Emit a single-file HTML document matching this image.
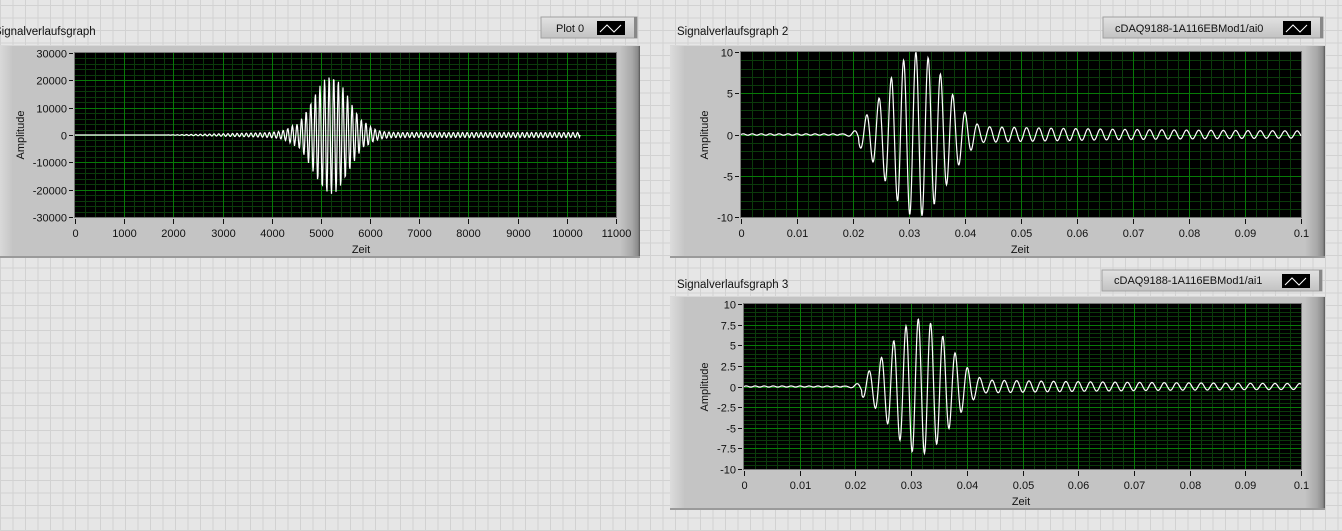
<!DOCTYPE html>
<html><head><meta charset="utf-8"><style>
html,body{margin:0;padding:0;}
body{width:1342px;height:531px;overflow:hidden;background-color:#e6e6e6;
background-image:repeating-linear-gradient(90deg,#d2d2d2 0 1px,transparent 1px 12.5px),repeating-linear-gradient(0deg,#d2d2d2 0 1px,transparent 1px 12.5px);
font-family:"Liberation Sans",sans-serif;}
svg{position:absolute;left:0;top:0;}
text{font-family:"Liberation Sans",sans-serif;font-size:11px;fill:#111;}
</style></head><body>
<svg id="s" width="1342" height="531" xmlns="http://www.w3.org/2000/svg">
<defs>
<linearGradient id="pr" x1="0" x2="1"><stop offset="0" stop-color="#c4c4c4"/><stop offset="0.6" stop-color="#a8a8a8"/><stop offset="0.9" stop-color="#8a8a8a"/><stop offset="1" stop-color="#555"/></linearGradient>
<linearGradient id="pl" x1="0" x2="1"><stop offset="0" stop-color="#dcdcdc"/><stop offset="1" stop-color="#c6c6c6"/></linearGradient>
<linearGradient id="lg" x1="0" y1="0" x2="0" y2="1"><stop offset="0" stop-color="#e2e2e2"/><stop offset="1" stop-color="#c2c2c2"/></linearGradient>
</defs>
<g id="g"></g>
<text x="-6" y="35" style="font-size:11.5px">Signalverlaufsgraph</text>
<text x="677" y="35" style="font-size:11.5px">Signalverlaufsgraph 2</text>
<text x="677" y="288" style="font-size:11.5px">Signalverlaufsgraph 3</text>
<text x="556" y="32">Plot 0</text>
<text x="1115" y="32">cDAQ9188-1A116EBMod1/ai0</text>
<text x="1114" y="284">cDAQ9188-1A116EBMod1/ai1</text>
<text transform="translate(24,135) rotate(-90)" text-anchor="middle">Amplitude</text>
<text transform="translate(708,135) rotate(-90)" text-anchor="middle">Amplitude</text>
<text transform="translate(708,387) rotate(-90)" text-anchor="middle">Amplitude</text>
<text x="361" y="253" text-anchor="middle">Zeit</text>
<text x="1020" y="253" text-anchor="middle">Zeit</text>
<text x="1021" y="505" text-anchor="middle">Zeit</text>
<g id="lbl"></g>
</svg>
<script>
var g=document.getElementById('g'),L=document.getElementById('lbl'),NS='http://www.w3.org/2000/svg';
function el(t,a,p){var e=document.createElementNS(NS,t);for(var k in a)e.setAttribute(k,a[k]);(p||g).appendChild(e);return e;}
function panel(x,y,w,h){el('rect',{x:x,y:y,width:w,height:h,fill:'#c4c4c4'});el('rect',{x:x,y:y,width:14,height:h,fill:'url(#pl)'});el('rect',{x:x+w-20,y:y,width:20,height:h,fill:'url(#pr)'});
el('rect',{x:x,y:y,width:w,height:1,fill:'#d8d8d8'});el('rect',{x:x,y:y+h-2,width:w,height:2,fill:'#9a9a9a'});}
function legend(x,y,w){el('rect',{x:x,y:y,width:w,height:21,fill:'url(#lg)',stroke:'#a0a0a0'});el('rect',{x:x+w-3,y:y,width:3,height:21,fill:'#888'});
el('rect',{x:x+w-40,y:y+4,width:28,height:14,fill:'#000'});el('polyline',{points:(x+w-37)+','+(y+15)+' '+(x+w-30)+','+(y+8)+' '+(x+w-23)+','+(y+15)+' '+(x+w-16)+','+(y+8),fill:'none',stroke:'#fff','stroke-width':1});}
function plot(px,py,pw,ph,xt,yt,f){
 el('rect',{x:px,y:py,width:pw,height:ph,fill:'#000'});
 var nx=xt.length-1,ny=yt.length-1;
 for(var i=0;i<nx*5;i++){var X=Math.round(px+pw*i/(nx*5))+.5;if(i%5)el('line',{x1:X,y1:py,x2:X,y2:py+ph,stroke:'#0b3a0b'});}
 for(var j=0;j<ny*5;j++){var Y=Math.round(py+ph*j/(ny*5))+.5;if(j%5)el('line',{x1:px,y1:Y,x2:px+pw,y2:Y,stroke:'#0b3a0b'});}
 for(i=0;i<=nx;i++){var X=Math.round(px+pw*i/nx)+.5;if(i>0&&i<nx)el('line',{x1:X,y1:py,x2:X,y2:py+ph,stroke:'#077a07'});el('line',{x1:X,y1:py+ph+2,x2:X,y2:py+ph+7,stroke:'#111'});
  var t=el('text',{x:X,y:py+ph+20,'text-anchor':'middle'},L);t.textContent=xt[i];}
 for(j=0;j<=ny;j++){var Y=Math.round(py+ph-ph*j/ny)+.5;if(j>0&&j<ny)el('line',{x1:px,y1:Y,x2:px+pw,y2:Y,stroke:'#077a07'});el('line',{x1:px-6,y1:Y,x2:px-2,y2:Y,stroke:'#111'});
  var t=el('text',{x:px-8,y:Y+4,'text-anchor':'end'},L);t.textContent=yt[j];}
 el('rect',{x:px-.5,y:py-.5,width:pw+1,height:ph+1,fill:'none',stroke:'#777'});
 var pts=[];for(var X=0;X<=pw;X+=0.5){var v=f(X);if(isNaN(v))break;pts.push((px+X).toFixed(1)+','+(py+ph/2-v*ph/2).toFixed(1));}
 el('polyline',{points:pts.join(' '),fill:'none',stroke:'#fff','stroke-width':1.2});
}
// graph1
panel(-2,45,642,213);legend(541,17,96);
plot(75,53,541,164,['0','1000','2000','3000','4000','5000','6000','7000','8000','9000','10000','11000'],['-30000','-20000','-10000','0','10000','20000','30000'],function(x){
 if(x>505)return NaN;var c=256,e=Math.exp(-Math.pow((x-c)/26,2))*0.72;var r=0;if(x>90&&x<220)r=0.035*(x-90)/130;if(x>290&&x<505)r=0.03;
 return (e+r)*Math.sin(x*2*Math.PI/4.6);});
// graph2
panel(670,45,655,213);legend(1103,17,220);
var f2=function(x,s){var c=176,a=0;var t=x-98;if(t<0)return 0.008*Math.sin(x*0.7);a=Math.exp(-Math.pow((x-c)/42,2));if(x>230)a=Math.max(a,0.07*Math.exp(-(x-230)/200)+0.03);if(t<20)a*=t/20*0.4+0.1;
 return a*Math.sin(t*2*Math.PI/12.3+s);};
plot(741,52,560,165,['0','0.01','0.02','0.03','0.04','0.05','0.06','0.07','0.08','0.09','0.1'],['-10','-5','0','5','10'],function(x){return f2(x,0);});
// graph3
panel(670,296,655,214);legend(1102,270,220);
plot(744,304,557,165,['0','0.01','0.02','0.03','0.04','0.05','0.06','0.07','0.08','0.09','0.1'],['-10','-7.5','-5','-2.5','0','2.5','5','7.5','10'],function(x){return f2(x,0.3)*0.82;});
</script>
</body></html>
